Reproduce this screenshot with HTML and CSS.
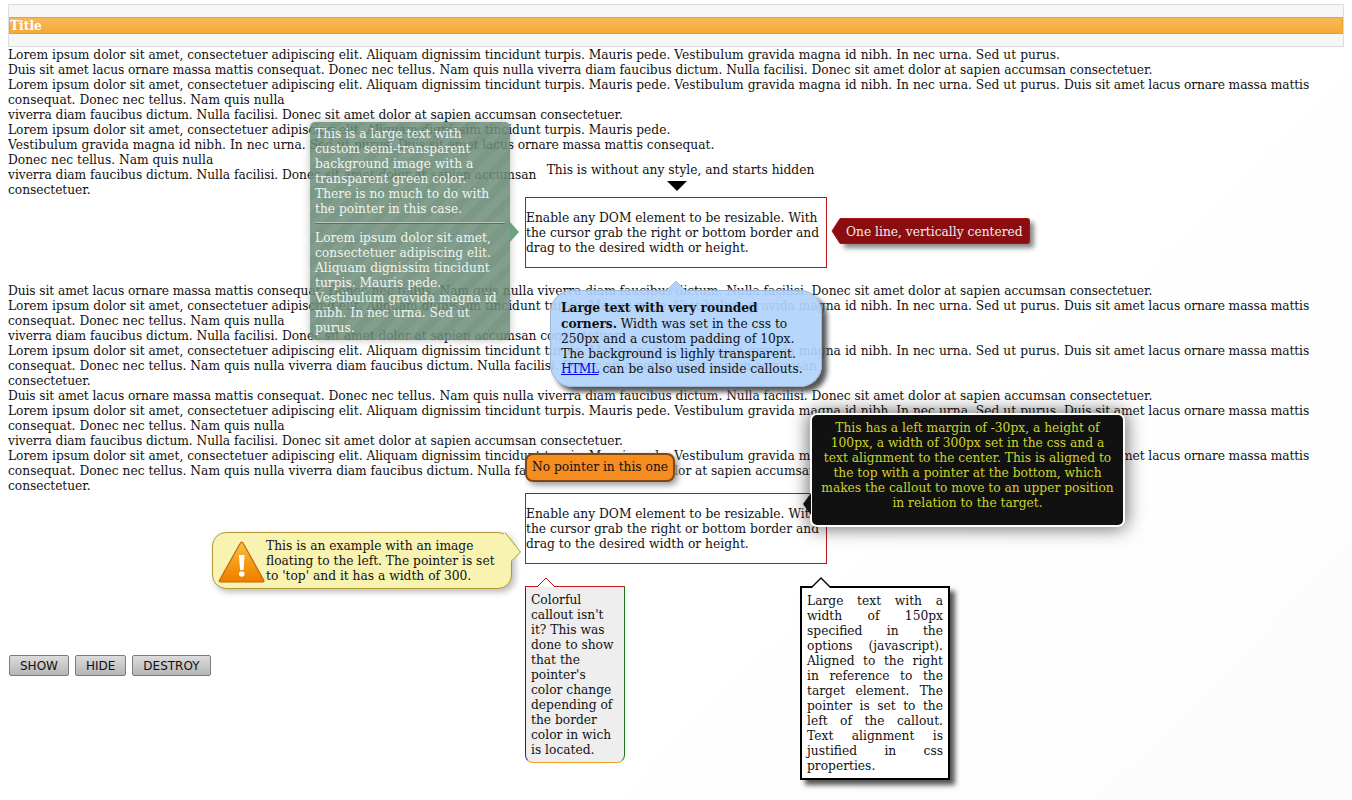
FILE: index.html
```html
<!DOCTYPE html>
<html lang="en">
<head>
  <meta charset="UTF-8">
  <title>Callouts</title>
  <link rel="stylesheet" href="styles.css">
</head>
<body>

  <div class="header">
    <div class="titlebar">Title</div>
  </div>

  <div class="text">
    <span class="lorem">Lorem ipsum dolor sit amet, consectetuer adipiscing elit. Aliquam dignissim tincidunt turpis. Mauris pede.</span> <span class="vest">Vestibulum gravida magna id nibh. In nec urna. Sed ut purus.</span><br>
    <span class="duis">Duis sit amet lacus ornare massa mattis</span> consequat. Donec nec tellus. Nam quis nulla <span class="viv">viverra diam faucibus dictum. Nulla facilisi. Donec sit amet dolor at sapien accumsan consectetuer.</span><br>
    <span class="lorem">Lorem ipsum dolor sit amet, consectetuer adipiscing elit. Aliquam dignissim tincidunt turpis. Mauris pede.</span> <span class="vest">Vestibulum gravida magna id nibh. In nec urna. Sed ut purus.</span> <span class="duis">Duis sit amet lacus ornare massa mattis</span> consequat. Donec nec tellus. Nam quis nulla<br>
    <span class="viv">viverra diam faucibus dictum. Nulla facilisi. Donec sit amet dolor at sapien accumsan consectetuer.</span><br>
    <span class="lorem">Lorem ipsum dolor sit amet, consectetuer adipiscing elit. Aliquam dignissim tincidunt turpis. Mauris pede.</span><br>
    <span class="vest">Vestibulum gravida magna id nibh. In nec urna. Sed ut purus.</span> <span class="duis">Duis sit amet lacus ornare massa mattis</span> consequat.<br>
    Donec nec tellus. Nam quis nulla
    <div class="narrow"><span class="viv">viverra diam faucibus dictum. Nulla facilisi. Donec sit amet dolor at sapien accumsan consectetuer.</span></div>
  </div>

  <div class="target">Enable any DOM element to be resizable. With the cursor grab the right or bottom border and drag to the desired width or height.</div>

  <div class="text">
    <span class="duis">Duis sit amet lacus ornare massa mattis</span> consequat. Donec nec tellus. Nam quis nulla <span class="viv">viverra diam faucibus dictum. Nulla facilisi. Donec sit amet dolor at sapien accumsan consectetuer.</span><br>
    <span class="lorem">Lorem ipsum dolor sit amet, consectetuer adipiscing elit. Aliquam dignissim tincidunt turpis. Mauris pede.</span> <span class="vest">Vestibulum gravida magna id nibh. In nec urna. Sed ut purus.</span> <span class="duis">Duis sit amet lacus ornare massa mattis</span> consequat. Donec nec tellus. Nam quis nulla<br>
    <span class="viv">viverra diam faucibus dictum. Nulla facilisi. Donec sit amet dolor at sapien accumsan consectetuer.</span><br>
    <span class="lorem">Lorem ipsum dolor sit amet, consectetuer adipiscing elit. Aliquam dignissim tincidunt turpis. Mauris pede.</span> <span class="vest">Vestibulum gravida magna id nibh. In nec urna. Sed ut purus.</span> <span class="duis">Duis sit amet lacus ornare massa mattis</span> consequat. Donec nec tellus. Nam quis nulla <span class="viv">viverra diam faucibus dictum. Nulla facilisi. Donec sit amet dolor at sapien accumsan<br>
    consectetuer.</span><br>
    <span class="duis">Duis sit amet lacus ornare massa mattis</span> consequat. Donec nec tellus. Nam quis nulla <span class="viv">viverra diam faucibus dictum. Nulla facilisi. Donec sit amet dolor at sapien accumsan consectetuer.</span><br>
    <span class="lorem">Lorem ipsum dolor sit amet, consectetuer adipiscing elit. Aliquam dignissim tincidunt turpis. Mauris pede.</span> <span class="vest">Vestibulum gravida magna id nibh. In nec urna. Sed ut purus.</span> <span class="duis">Duis sit amet lacus ornare massa mattis</span> consequat. Donec nec tellus. Nam quis nulla<br>
    <span class="viv">viverra diam faucibus dictum. Nulla facilisi. Donec sit amet dolor at sapien accumsan consectetuer.</span><br>
    <span class="lorem">Lorem ipsum dolor sit amet, consectetuer adipiscing elit. Aliquam dignissim tincidunt turpis. Mauris pede.</span> <span class="vest">Vestibulum gravida magna id nibh. In nec urna. Sed ut purus.</span> <span class="duis">Duis sit amet lacus ornare massa mattis</span> consequat. Donec nec tellus. Nam quis nulla <span class="viv">viverra diam faucibus dictum. Nulla facilisi. Donec sit amet dolor at sapien accumsan<br>
    consectetuer.</span>
  </div>

  <div class="target">Enable any DOM element to be resizable. With the cursor grab the right or bottom border and drag to the desired width or height.</div>

  <div class="buttons">
    <button>SHOW</button>
    <button>HIDE</button>
    <button>DESTROY</button>
  </div>

  <!-- callouts, they sit over the page -->
  <div class="callout green">
    This is a large text with custom semi-transparent background image with a transparent green color. There is no much to do with the pointer in this case.
    <hr>
    Lorem ipsum dolor sit amet, consectetuer adipiscing elit. Aliquam dignissim tincidunt turpis. Mauris pede. Vestibulum gravida magna id nibh. In nec urna. Sed ut purus.
    <span class="ptr ptr-green"></span>
  </div>

  <div class="callout plain">
    This is without any style, and starts hidden
    <span class="ptr ptr-plain"></span>
  </div>

  <div class="callout red">
    One line, vertically centered
    <svg class="ptr ptr-red" width="9" height="26" viewBox="0 0 9 26"><path d="M9 0.5 L1 13 L9 25.5 Z" fill="#8c0d10"/><path d="M9 0.5 L1 13 L9 25.5" fill="none" stroke="#b5161c"/></svg>
  </div>

  <div class="callout blue">
    <b>Large text with very rounded corners.</b> Width was set in the css to 250px and a custom padding of 10px. The background is lighly transparent. <a href="#">HTML</a> can be also used inside callouts.
    <svg class="ptr ptr-blue" width="20" height="10" viewBox="0 0 20 10"><path d="M0 10 L10 0 L20 10 Z" fill="#b1d2fb" stroke="#a9bdd6"/><path d="M1 10 L19 10" stroke="#b1d2fb" stroke-width="2"/></svg>
  </div>

  <div class="callout black">
    This has a left margin of -30px, a height of 100px, a width of 300px set in the css and a text alignment to the center. This is aligned to the top with a pointer at the bottom, which makes the callout to move to an upper position in relation to the target.
    <span class="ptr ptr-black"></span>
  </div>

  <div class="callout orange">No pointer in this one</div>

  <div class="callout yellow">
    <svg class="warn" width="46" height="44" viewBox="0 0 46 44">
      <defs>
        <linearGradient id="warnFill" x1="0" y1="0" x2="0" y2="1">
          <stop offset="0" stop-color="#f7c04a"/>
          <stop offset="0.55" stop-color="#f49a10"/>
          <stop offset="1" stop-color="#ee7d00"/>
        </linearGradient>
      </defs>
      <path d="M22.7 2 Q23.6 2 24.6 4 L44.6 40 Q45.6 42 43.6 42 L1.6 42 Q-0.4 42 0.6 40 L20.8 4 Q21.8 2 22.7 2 Z" fill="url(#warnFill)" stroke="#c0680f" stroke-width="1.2"/>
      <path d="M20 15 L25.6 15 L24.6 30 L21 30 Z" fill="#fff"/>
      <circle cx="22.8" cy="34" r="2.8" fill="#fff"/>
    </svg>
    <p class="yellow-text">This is an example with an image floating to the left. The pointer is set to 'top' and it has a width of 300.</p>
    <svg class="ptr ptr-yellow" width="18" height="30" viewBox="0 0 18 30"><path d="M0 1 L2 1 L16.5 20 L8 28.5 L0 28.5 Z" fill="#f8f3b1"/><path d="M1 0.5 L16.5 20 L8 28.5" fill="none" stroke="#b19a35"/></svg>
  </div>

  <div class="callout colorful">
    Colorful callout isn't it? This was done to show that the pointer's color change depending of the border color in wich is located.
    <svg class="ptr ptr-colorful" width="20" height="10" viewBox="0 0 20 10"><path d="M1 10 L10 1 L19 10" fill="#fff" stroke="#c8141c"/></svg>
  </div>

  <div class="callout justified">
    Large text with a width of 150px specified in the options (javascript). Aligned to the right in reference to the target element. The pointer is set to the left of the callout. Text alignment is justified in css properties.
    <svg class="ptr ptr-justified" width="20" height="11" viewBox="0 0 20 11"><path d="M0 11 L10 1 L20 11" fill="#fff" stroke="#000" stroke-width="1.4"/></svg>
  </div>

</body>
</html>
```

FILE: styles.css
```css
html {
  min-height: 100%;
  background: linear-gradient(135deg, #fff 62%, #fcfcfc 100%);
}

body {
  margin: 4px 8px 8px;
  font-family: "DejaVu Serif", serif;
  font-size: 12.25px;
  line-height: 15px;
  color: #111;
}

.header {
  border: 1px solid #ddd;
  background: #f6f6f6;
  padding: 12px 0;
}

.titlebar {
  border: 1px solid #e9a32e;
  border-bottom-color: #eb9f1d;
  background: linear-gradient(#f8b854, #f6b04a 55%, #f6a934);
  color: #fff;
  font-weight: bold;
  height: 15px;
}

.text {
  padding-top: 1px;
  margin-bottom: -1px;
}

/* small spacing fixes so the sentences end where they do in the page */
.lorem { letter-spacing: -0.02px; }
.vest { letter-spacing: 0.033px; }
.duis { letter-spacing: -0.1px; }
.viv { letter-spacing: -0.04px; }

.narrow {
  width: 532px;
}

.target {
  width: 300px;
  margin: 0 0 15px 517px;
  padding: 13px 0 11px 0;
  border: 1px solid #b8141c;
  background: #fff;
}

.buttons {
  display: flex;
  gap: 6px;
  margin: 91px 0 0 1px;
}

.buttons button {
  height: 21px;
  padding: 0 10px;
  border: 1px solid #7c7c7c;
  border-radius: 2px;
  background: linear-gradient(#dcdcdc, #b5b5b5);
  font-family: "DejaVu Sans", sans-serif;
  font-size: 12px;
  color: #111;
}

.callout {
  position: absolute;
  box-sizing: border-box;
}

.ptr {
  position: absolute;
  display: block;
}

.green {
  left: 310px;
  top: 122px;
  width: 200px;
  height: 218px;
  padding: 5px 5px 4px;
  border-radius: 5px;
  color: #f2f4ef;
  background: repeating-linear-gradient(135deg, rgba(104, 136, 116, 0.87) 0 8px, rgba(112, 143, 123, 0.87) 8px 16px);
  box-shadow: 0 0 8px rgba(0, 0, 0, 0.25);
}

.green hr {
  margin: 5px 0 7px;
  height: 0;
  border: 0;
  border-top: 1px solid #b9c6bd;
  border-bottom: 1px solid #59705f;
}

.ptr-green {
  left: 200px;
  top: 100px;
  border-style: solid;
  border-width: 10px 0 10px 9px;
  border-color: transparent transparent transparent #6ba37f;
}

.plain {
  left: 542px;
  top: 163px;
  width: 277px;
  text-align: center;
}

.ptr-plain {
  left: 125px;
  top: 18px;
  border-style: solid;
  border-width: 10px 10px 0;
  border-color: #000 transparent transparent;
}

.red {
  left: 840px;
  top: 218px;
  width: 190px;
  height: 26px;
  padding: 6px 5px 4px 6px;
  border: 1px solid #a81218;
  border-left: 0;
  border-radius: 0 3px 3px 0;
  color: #eee;
  background: #8c0d10;
  box-shadow: 4px 4px 5px #888;
}

.ptr-red {
  left: -9px;
  top: -1px;
}

.blue {
  left: 550px;
  top: 290px;
  width: 272px;
  height: 97px;
  padding: 9px 10px;
  border: 1px solid #9db4d2;
  border-radius: 22px;
  background: rgba(176, 210, 252, 0.92);
  box-shadow: 5px 5px 5px #555;
}

.blue b {
  letter-spacing: -0.07px;
}

.blue a {
  letter-spacing: -0.5px;
}

.ptr-blue {
  left: 115px;
  top: -10px;
}

.black {
  left: 810px;
  top: 413px;
  width: 315px;
  height: 114px;
  padding: 6px 8px;
  border: 2px solid #fff;
  border-radius: 7px;
  background: #111;
  color: #cdd42c;
  text-align: center;
  box-shadow: 0 0 18px 2px rgba(0, 0, 0, 0.55);
}

.ptr-black {
  left: -9px;
  top: 78px;
  border-style: solid;
  border-width: 11px 8px 11px 0;
  border-color: transparent #111 transparent transparent;
}

.orange {
  left: 525px;
  top: 453px;
  width: 150px;
  height: 29px;
  padding: 5px 5px;
  border: 2px solid #7b4a14;
  border-radius: 8px;
  background: #f78d1e;
  box-shadow: 3px 3px 6px #999;
  white-space: nowrap;
}

.yellow {
  left: 212px;
  top: 532px;
  width: 300px;
  height: 57px;
  display: flex;
  padding: 6px 7px;
  border: 1px solid #b19a35;
  border-radius: 14px;
  background: #f8f3b1;
  box-shadow: 3px 3px 6px #bbb;
}

.warn {
  flex: none;
  margin: 1px 1px 0 -1px;
  overflow: visible;
}

.yellow-text {
  margin: 0;
}

.ptr-yellow {
  left: 291px;
  top: -1px;
}

.colorful {
  left: 525px;
  top: 586px;
  width: 100px;
  height: 177px;
  padding: 6px 5px;
  border-top: 1px solid #c8141c;
  border-right: 1px solid #1a7a1a;
  border-bottom: 1px solid #f0a020;
  border-left: 1px solid #2020a0;
  border-radius: 0 0 8px 8px;
  background: #eee;
}

.ptr-colorful {
  left: 10px;
  top: -10px;
}

.justified {
  left: 800px;
  top: 586px;
  width: 150px;
  height: 194px;
  padding: 6px 5px;
  border: 2px solid #000;
  background: #fff;
  text-align: justify;
  box-shadow: 5px 5px 5px #555;
}

.ptr-justified {
  left: 9px;
  top: -11px;
}
```
